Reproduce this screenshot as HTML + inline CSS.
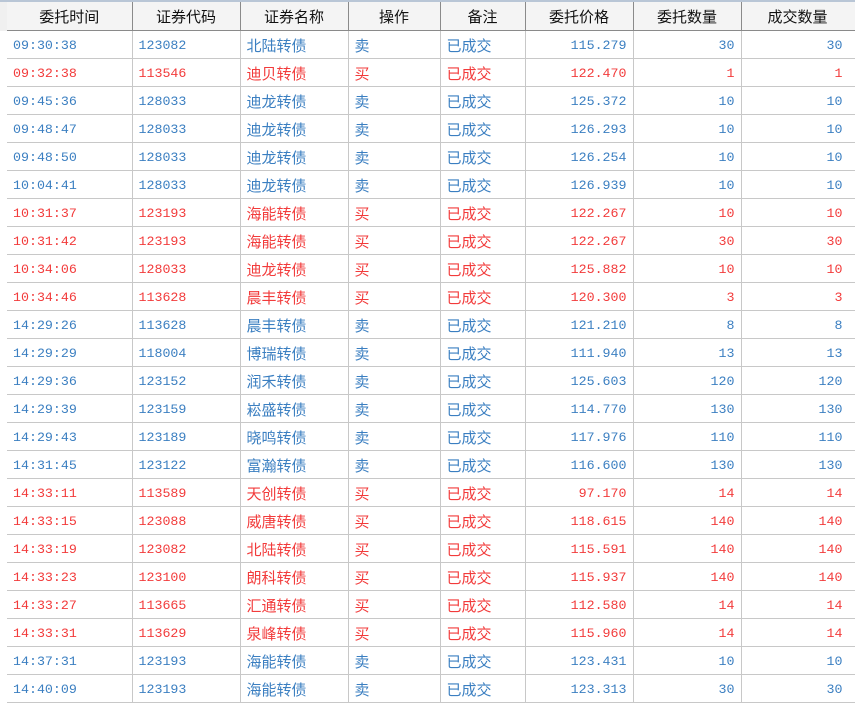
<!DOCTYPE html>
<html><head><meta charset="utf-8"><style>
body{margin:0;width:855px;height:703px;overflow:hidden;background:#fff;font-family:"Liberation Sans","Noto Sans CJK SC",sans-serif}
.top{position:absolute;left:0;top:0;width:855px;height:2px;background:#b9c6d6}
.strip{position:absolute;left:0;top:2px;width:7px;height:29px;background:#f0f0f0}
table{position:absolute;left:7px;top:2px;border-collapse:collapse;table-layout:fixed;width:860px}
th{height:28px;background:#f4f4f4;font-weight:normal;font-size:15px;color:#111;border-right:1px solid #8a8a8a;border-bottom:1px solid #8a8a8a;padding:0}
td{height:25px;border-right:1px solid #c8c8c8;border-bottom:1px solid #c8c8c8;padding:2px 6px 0;font-size:13.3px;white-space:nowrap;overflow:hidden}
td.n{font-family:"Liberation Mono",monospace}
td.c{font-family:"Liberation Sans","Noto Sans CJK SC",sans-serif;font-size:15px}
td.r{text-align:right}
tr.b td{color:#3b7fc1}
tr.s td{color:#f23b3b}
</style></head><body>
<div class="top"></div><div class="strip"></div>
<table>
<colgroup><col style="width:125px"><col style="width:108px"><col style="width:108px"><col style="width:92px"><col style="width:85px"><col style="width:108px"><col style="width:108px"><col style="width:126px"></colgroup>
<tr><th>委托时间</th><th>证券代码</th><th>证券名称</th><th>操作</th><th>备注</th><th>委托价格</th><th>委托数量</th><th style="text-align:left;padding-left:26px">成交数量</th></tr>
<tbody id="b"></tbody>
</table>
<script>
var d=[["09:30:38","123082","北陆转债","卖","115.279","30"],["09:32:38","113546","迪贝转债","买","122.470","1"],["09:45:36","128033","迪龙转债","卖","125.372","10"],["09:48:47","128033","迪龙转债","卖","126.293","10"],["09:48:50","128033","迪龙转债","卖","126.254","10"],["10:04:41","128033","迪龙转债","卖","126.939","10"],["10:31:37","123193","海能转债","买","122.267","10"],["10:31:42","123193","海能转债","买","122.267","30"],["10:34:06","128033","迪龙转债","买","125.882","10"],["10:34:46","113628","晨丰转债","买","120.300","3"],["14:29:26","113628","晨丰转债","卖","121.210","8"],["14:29:29","118004","博瑞转债","卖","111.940","13"],["14:29:36","123152","润禾转债","卖","125.603","120"],["14:29:39","123159","崧盛转债","卖","114.770","130"],["14:29:43","123189","晓鸣转债","卖","117.976","110"],["14:31:45","123122","富瀚转债","卖","116.600","130"],["14:33:11","113589","天创转债","买","97.170","14"],["14:33:15","123088","威唐转债","买","118.615","140"],["14:33:19","123082","北陆转债","买","115.591","140"],["14:33:23","123100","朗科转债","买","115.937","140"],["14:33:27","113665","汇通转债","买","112.580","14"],["14:33:31","113629","泉峰转债","买","115.960","14"],["14:37:31","123193","海能转债","卖","123.431","10"],["14:40:09","123193","海能转债","卖","123.313","30"]];
var h="";d.forEach(function(r){h+='<tr class="'+(r[3]=="卖"?"b":"s")+'"><td class="n">'+r[0]+'</td><td class="n">'+r[1]+'</td><td class="c">'+r[2]+'</td><td class="c">'+r[3]+'</td><td class="c">已成交</td><td class="n r">'+r[4]+'</td><td class="n r">'+r[5]+'</td><td class="n r" style="padding-right:24px">'+r[5]+'</td></tr>'});
document.getElementById("b").innerHTML=h;
</script>
</body></html>
